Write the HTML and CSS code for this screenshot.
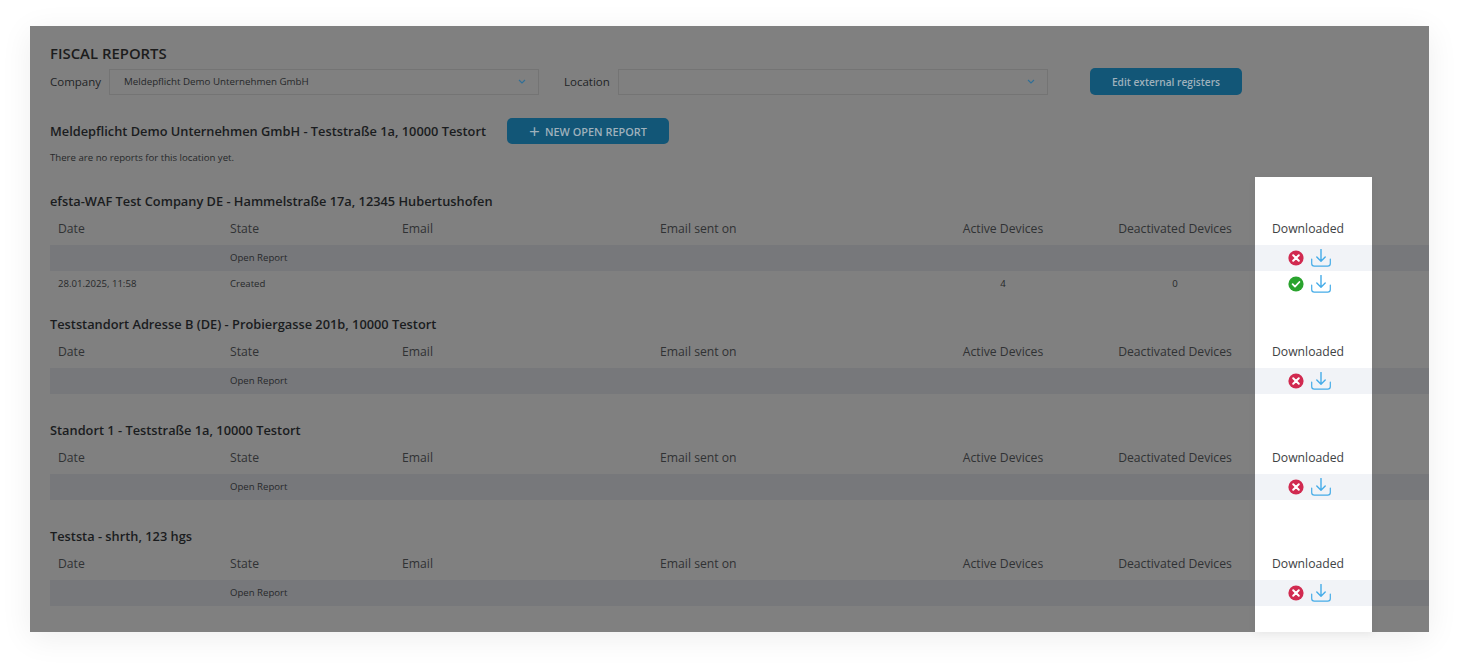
FILE: index.html
```html
<!DOCTYPE html>
<html lang="en">
<head>
  <meta charset="UTF-8" />
  <title>Fiscal Reports</title>
  <link rel="stylesheet" href="styles.css">
</head>
<body>
  <!-- Icons used in the download column -->
  <svg class="icon-defs" aria-hidden="true">
    <symbol id="icon-fail" viewBox="0 0 16 16">
      <circle cx="8" cy="8" r="7.6" fill="#d12a50" />
      <path d="M5.2 5.2l5.6 5.6M10.8 5.2l-5.6 5.6" fill="none" stroke="#fff" stroke-width="2" stroke-linecap="round" />
    </symbol>
    <symbol id="icon-ok" viewBox="0 0 16 16">
      <circle cx="8" cy="8" r="7.6" fill="#2aa32e" />
      <path d="M4.6 8.2l2.4 2.4 4.4-4.6" fill="none" stroke="#fff" stroke-width="1.8" stroke-linecap="round" stroke-linejoin="round" />
    </symbol>
    <symbol id="icon-download" viewBox="0 0 20 18">
      <path d="M10 .5v11.5M5.8 8l4.2 4.2L14.2 8" fill="none" stroke="#45ace8" stroke-width="1.4" stroke-linecap="round" stroke-linejoin="round" />
      <path d="M.7 10v4.6c0 1.5 1 2.6 2.6 2.6h13.4c1.6 0 2.6-1.1 2.6-2.6V10" fill="none" stroke="#45ace8" stroke-width="1.2" stroke-linecap="round" />
    </symbol>
  </svg>

  <div class="panel">
    <!-- White column that is not dimmed -->
    <div class="spotlight"></div>

    <div class="content">
      <h1 class="page-title">FISCAL REPORTS</h1>

      <div class="toolbar">
        <label class="field-label label-company">Company</label>
        <div class="select">
          <span>Meldepflicht Demo Unternehmen GmbH</span>
          <svg class="chevron" viewBox="0 0 8 5"><path d="M1 1l3 3 3-3" fill="none" stroke="#2f6f97" stroke-width="1.1" /></svg>
        </div>
        <label class="field-label label-location">Location</label>
        <div class="select">
          <span></span>
          <svg class="chevron" viewBox="0 0 8 5"><path d="M1 1l3 3 3-3" fill="none" stroke="#2f6f97" stroke-width="1.1" /></svg>
        </div>
        <button class="btn btn-edit">Edit external registers</button>
      </div>

      <div class="open-head">
        <h2 class="location-title">Meldepflicht Demo Unternehmen GmbH - Teststraße 1a, 10000 Testort</h2>
        <button class="btn btn-new"><span class="plus">+</span>NEW OPEN REPORT</button>
      </div>
      <p class="empty-note">There are no reports for this location yet.</p>

      <section class="location">
        <h2 class="location-title">efsta-WAF Test Company DE - Hammelstraße 17a, 12345 Hubertushofen</h2>
        <div class="row row-head">
          <div class="cell">Date</div>
          <div class="cell">State</div>
          <div class="cell">Email</div>
          <div class="cell">Email sent on</div>
          <div class="cell center">Active Devices</div>
          <div class="cell center deact">Deactivated Devices</div>
          <div class="cell center dl">Downloaded</div>
        </div>
        <div class="row row-open">
          <div class="cell"></div>
          <div class="cell">Open Report</div>
          <div class="cell"></div>
          <div class="cell"></div>
          <div class="cell"></div>
          <div class="cell"></div>
          <div class="cell icons">
            <svg class="icon-status"><use href="#icon-fail" /></svg>
            <svg class="icon-dl"><use href="#icon-download" /></svg>
          </div>
        </div>
        <div class="row">
          <div class="cell">28.01.2025, 11:58</div>
          <div class="cell">Created</div>
          <div class="cell"></div>
          <div class="cell"></div>
          <div class="cell center">4</div>
          <div class="cell center deact">0</div>
          <div class="cell icons">
            <svg class="icon-status"><use href="#icon-ok" /></svg>
            <svg class="icon-dl"><use href="#icon-download" /></svg>
          </div>
        </div>
      </section>

      <section class="location">
        <h2 class="location-title">Teststandort Adresse B (DE) - Probiergasse 201b, 10000 Testort</h2>
        <div class="row row-head">
          <div class="cell">Date</div>
          <div class="cell">State</div>
          <div class="cell">Email</div>
          <div class="cell">Email sent on</div>
          <div class="cell center">Active Devices</div>
          <div class="cell center deact">Deactivated Devices</div>
          <div class="cell center dl">Downloaded</div>
        </div>
        <div class="row row-open">
          <div class="cell"></div>
          <div class="cell">Open Report</div>
          <div class="cell"></div>
          <div class="cell"></div>
          <div class="cell"></div>
          <div class="cell"></div>
          <div class="cell icons">
            <svg class="icon-status"><use href="#icon-fail" /></svg>
            <svg class="icon-dl"><use href="#icon-download" /></svg>
          </div>
        </div>
      </section>

      <section class="location">
        <h2 class="location-title">Standort 1 - Teststraße 1a, 10000 Testort</h2>
        <div class="row row-head">
          <div class="cell">Date</div>
          <div class="cell">State</div>
          <div class="cell">Email</div>
          <div class="cell">Email sent on</div>
          <div class="cell center">Active Devices</div>
          <div class="cell center deact">Deactivated Devices</div>
          <div class="cell center dl">Downloaded</div>
        </div>
        <div class="row row-open">
          <div class="cell"></div>
          <div class="cell">Open Report</div>
          <div class="cell"></div>
          <div class="cell"></div>
          <div class="cell"></div>
          <div class="cell"></div>
          <div class="cell icons">
            <svg class="icon-status"><use href="#icon-fail" /></svg>
            <svg class="icon-dl"><use href="#icon-download" /></svg>
          </div>
        </div>
      </section>

      <section class="location">
        <h2 class="location-title">Teststa - shrth, 123 hgs</h2>
        <div class="row row-head">
          <div class="cell">Date</div>
          <div class="cell">State</div>
          <div class="cell">Email</div>
          <div class="cell">Email sent on</div>
          <div class="cell center">Active Devices</div>
          <div class="cell center deact">Deactivated Devices</div>
          <div class="cell center dl">Downloaded</div>
        </div>
        <div class="row row-open">
          <div class="cell"></div>
          <div class="cell">Open Report</div>
          <div class="cell"></div>
          <div class="cell"></div>
          <div class="cell"></div>
          <div class="cell"></div>
          <div class="cell icons">
            <svg class="icon-status"><use href="#icon-fail" /></svg>
            <svg class="icon-dl"><use href="#icon-download" /></svg>
          </div>
        </div>
      </section>
    </div>
  </div>
</body>
</html>
```

FILE: styles.css
```css
html, body {
  margin: 0;
  height: 100%;
  background: #fff;
  overflow: hidden;
}

body {
  padding: 26px 30px 35px;
  box-sizing: border-box;
  font-family: 'Open Sans', 'Noto Sans', sans-serif;
  color: #26282a;
}

.icon-defs {
  display: none;
}

/* Dimmed page */
.panel {
  position: relative;
  height: 606px;
  background: #808080;
  box-shadow: 0 6px 30px rgba(0, 0, 0, 0.07);
}

.spotlight {
  position: absolute;
  left: 1225px;
  top: 151px;
  bottom: 0;
  width: 117px;
  background: #fff;
  box-shadow: 0 2px 8px rgba(0, 0, 0, 0.05);
}

.content {
  position: relative;
  padding: 18px 0 0 20px;
}

.page-title {
  margin: 0;
  font-size: 14.9px;
  line-height: 18px;
  font-weight: 600;
  color: #1c1c1c;
}

/* Company / location filter */
.toolbar {
  display: flex;
  align-items: center;
  margin-top: 6px;
  height: 27px;
}

.field-label {
  font-size: 11.5px;
  color: #222426;
}

.label-company {
  width: 59px;
}

.label-location {
  width: 54px;
  margin-left: 25.5px;
}

.select {
  box-sizing: border-box;
  width: 429.5px;
  height: 26px;
  padding: 0 12px 0 14px;
  display: flex;
  align-items: center;
  justify-content: space-between;
  border: 1px solid #747474;
  font-size: 9.75px;
  color: #26282a;
}

.chevron {
  width: 8px;
  height: 5px;
}

.btn {
  border: 0;
  border-radius: 5px;
  background: #125677;
  color: #9fb1bc;
  font-family: inherit;
  font-weight: 600;
  padding: 0;
}

.btn-edit {
  width: 152px;
  height: 27px;
  margin-left: 42.5px;
  font-size: 10.2px;
}

.open-head {
  display: flex;
  align-items: center;
  margin-top: 23px;
  height: 26px;
}

.btn-new {
  width: 162px;
  height: 26px;
  margin-left: 21px;
  font-size: 10.9px;
  display: flex;
  align-items: center;
  justify-content: center;
}

.plus {
  font-size: 19px;
  line-height: 1;
  font-weight: 400;
  margin-right: 5px;
}

.location-title {
  margin: 0 0 2px;
  font-size: 12.8px;
  line-height: 18px;
  font-weight: 600;
  color: #1a1c1e;
}

.open-head .location-title {
  margin: 0;
}

.empty-note {
  margin: 6px 0 26px;
  font-size: 9.65px;
  line-height: 16px;
  color: #26282a;
}

/* Report tables, one per location */
.location {
  min-height: 106px;
  padding-bottom: 17px;
  box-sizing: border-box;
}

.location:first-of-type {
  min-height: 123px;
}

.row {
  display: grid;
  grid-template-columns: 172px 172px 258px 265px 172px 166px 117px 57px;
  height: 26px;
  align-items: center;
  font-size: 9.6px;
  color: #27292b;
}

.row-head {
  height: 33px;
  font-size: 12.2px;
  color: #303234;
}

.row-open {
  background: #77787b;
}

.cell {
  padding-left: 8px;
  padding-bottom: 2px;
  box-sizing: border-box;
}

.row-head .cell {
  padding-bottom: 0;
}

.center {
  text-align: center;
  padding-left: 0;
}

.deact {
  padding-left: 6px;
}

.dl {
  padding-right: 11px;
  color: #404244;
}

.icons {
  height: 100%;
  padding: 0 0 0 33px;
  display: flex;
  align-items: center;
  gap: 7px;
}

.row-open .icons {
  background: #f1f3f7;
}

.icon-status {
  width: 16px;
  height: 16px;
}

.icon-dl {
  width: 20px;
  height: 18px;
}
```
